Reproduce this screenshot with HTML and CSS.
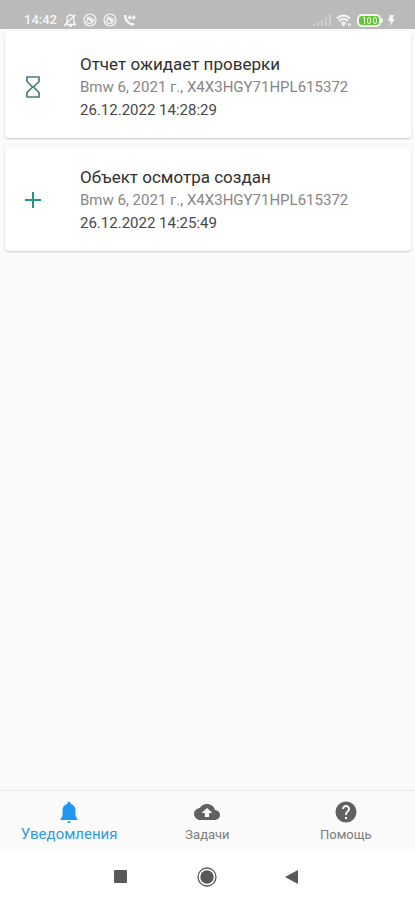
FILE: index.html
```html
<!DOCTYPE html>
<html lang="ru">
<head>
<meta charset="utf-8">
<meta name="viewport" content="width=device-width, initial-scale=1">
<title>Уведомления</title>
<link rel="stylesheet" href="styles.css">
</head>
<body>
<header class="status">
  <div class="status-group">
    <span class="clock">14:42</span>
    <svg width="14" height="14" viewBox="0 0 14 14" fill="none" stroke="currentColor" stroke-width="1.3"><path d="M2 11.5h10.5L11 9.500V6C11 3.500 9.500 2 7.500 2S4 3.500 4 6v3.500zM6 13h3M1 13L12.500 1.500"/></svg>
    <svg width="14" height="14" viewBox="0 0 14 14" fill="none" stroke="currentColor" stroke-width="1.200"><circle cx="7" cy="7" r="6"/><path d="M3 9l3-5 5 3-4 4zM4 4l6 6M6 6l3 1"/></svg>
    <svg width="14" height="14" viewBox="0 0 14 14" fill="none" stroke="currentColor" stroke-width="1.200"><circle cx="7" cy="7" r="6"/><path d="M3 9l3-5 5 3-4 4zM4 4l6 6M6 6l3 1"/></svg>
    <svg width="13" height="14" viewBox="0 0 13 14" fill="none" stroke="currentColor"><path stroke-width="2.400" d="M2 2c0 6 4 9.500 9 9.500M1.500 3.500h2M10 12v-2"/><path stroke-width="1.400" d="M5.500 4.500h6M7.500 2.500l-2 2 2 2M10 2.500l2 2-2 2"/></svg>
  </div>
  <div class="status-group status-right">
    <svg class="signal" width="18" height="12" viewBox="0 0 18 12" fill="currentColor"><path d="M0 10h2v2H0zM4 8h2v4H4zM8 6h2v6H8zM12 3h2v9h-2zM16 0h2v12h-2z"/></svg>
    <svg width="16" height="13" viewBox="0 0 16 13" fill="none" stroke="currentColor" stroke-width="2"><path d="M1 4.500c4-4 9-4 13 0M3 7c3-3 6-3 9 0M5.500 9.500c1.500-1.300 2.500-1.300 4 0"/><path d="M12.500 9v3M14.500 9v3" stroke-width="1"/><path d="M5.500 10h4l-2 2.500z" fill="currentColor" stroke="none"/></svg>
    <svg width="26" height="13" viewBox="0 0 26 13"><rect width="24" height="13" rx="5" fill="#f2f8ee"/><path d="M24 4a2 2 0 0 1 2 2v1a2 2 0 0 1-2 2z" fill="#f2f8ee"/><rect x="2" y="2" width="20" height="9" rx="3" fill="#65c63b"/><path d="M6 4l1.500-1v7" fill="none" stroke="#eef8e8"/><rect x="10.500" y="3.500" width="3" height="6" rx="1.500" fill="none" stroke="#eef8e8"/><rect x="16.500" y="3.500" width="3" height="6" rx="1.500" fill="none" stroke="#eef8e8"/></svg>
    <svg width="7" height="11" viewBox="0 0 7 11" fill="currentColor"><path d="M2 0h4L4.500 4H7L2 11l.8-5H0z"/></svg>
  </div>
</header>

<main class="list">
  <article class="card">
    <div class="card-icon"><svg width="16" height="24" viewBox="0 0 16 24" fill="none" stroke="#4a7c80" stroke-width="1.700"><path d="M2 2h12v4.500L8.500 12l5.500 5.500V22H2v-4.500L7.500 12 2 6.500z"/></svg></div>
    <div class="card-text">
      <h2 class="title">Отчет ожидает проверки</h2>
      <p class="object">Bmw 6, 2021 г., X4X3HGY71HPL615372</p>
      <time class="date" datetime="2022-12-26T14:28:29">26.12.2022 14:28:29</time>
    </div>
  </article>
  <article class="card">
    <div class="card-icon"><svg width="16" height="16" viewBox="0 0 16 16" fill="none" stroke="#239782" stroke-width="2"><path d="M8 0v16M0 8h16"/></svg></div>
    <div class="card-text">
      <h2 class="title">Объект осмотра создан</h2>
      <p class="object">Bmw 6, 2021 г., X4X3HGY71HPL615372</p>
      <time class="date" datetime="2022-12-26T14:25:49">26.12.2022 14:25:49</time>
    </div>
  </article>
</main>

<nav class="tabs">
  <a class="tab active" href="#notifications" aria-current="page">
    <svg width="24" height="24" viewBox="0 0 24 24" fill="#2196f3"><path d="M12 23c1.100 0 2-.7 2-1.500h-4c0 .8.900 1.500 2 1.500zM18.500 16v-5.500c0-3.300-1.800-6-5-6.700v-.6c0-.9-.6-1.500-1.500-1.500s-1.500.6-1.500 1.500v.6c-3.200.7-5 3.400-5 6.700V16L3.500 19v1h17v-1z"/></svg>
    Уведомления
  </a>
  <a class="tab" href="#tasks">
    <svg width="26" height="24" viewBox="0 0 24 24" preserveAspectRatio="none" fill="#616161"><path d="M19.350 10.040C18.670 6.590 15.640 4 12 4 9.110 4 6.600 5.640 5.350 8.040 2.340 8.360 0 10.910 0 14c0 3.310 2.690 6 6 6h13c2.760 0 5-2.240 5-5 0-2.640-2.050-4.780-4.650-4.960zM14 13v4h-4v-4H7l5-5 5 5h-3z"/></svg>
    Задачи
  </a>
  <a class="tab" href="#help">
    <svg width="24" height="24" viewBox="0 0 24 24" fill="#616161"><path d="M12 1.500a10.500 10.500 0 1 0 0 21 10.500 10.500 0 0 0 0-21zm1 17.500h-2v-2h2zm2.070-7.750l-.9.920C13.450 12.900 13 13.500 13 15h-2v-.5c0-1.100.450-2.100 1.170-2.830l1.240-1.260c.370-.360.590-.860.590-1.410 0-1.100-.9-2-2-2s-2 .9-2 2H8c0-2.210 1.790-4 4-4s4 1.790 4 4c0 .880-.360 1.680-.930 2.250z"/></svg>
    Помощь
  </a>
</nav>

<footer class="system">
  <button class="key" aria-label="Недавние"><svg width="20" height="20" viewBox="0 0 20 20"><rect x="3" y="3" width="13" height="13" rx="1" fill="#585858"/></svg></button>
  <button class="key" aria-label="Домой"><svg width="20" height="20" viewBox="0 0 20 20"><circle cx="10" cy="10" r="9" fill="none" stroke="#585858" stroke-width="1.300"/><circle cx="10" cy="10" r="6.700" fill="#585858"/></svg></button>
  <button class="key" aria-label="Назад"><svg width="20" height="20" viewBox="0 0 20 20"><path d="M15 3v14L2 10z" fill="#585858"/></svg></button>
</footer>
</body>
</html>
```
FILE: styles.css
```css
* { box-sizing: border-box; }

body {
  margin: 0;
  min-height: 100vh;
  display: flex;
  flex-direction: column;
  background: #fafafa;
  font-family: Roboto, "Liberation Sans", sans-serif;
}

svg { display: block; flex: none; }

.status {
  display: flex;
  justify-content: space-between;
  padding: 12px 20px 0 24px;
  height: 29px;
  background: #bababa;
  color: #f6f6f6;
}

.status-group {
  display: flex;
  align-items: center;
  gap: 6px;
  height: 16px;
}

.status-right { gap: 5px; }
.clock { font-size: 13px; font-weight: 500; line-height: 16px; }
.signal { color: #cecece; }

.list {
  flex: 1;
  display: flex;
  flex-direction: column;
  gap: 10px;
  padding: 2px 4px 0 5px;
}

.card {
  display: flex;
  align-items: center;
  min-height: 103px;
  padding: 16px 0;
  background: #fff;
  border-radius: 4px;
  box-shadow: 0 1px 2px rgba(0, 0, 0, 0.2);
}

.card:first-child {
  min-height: 107px;
  padding-top: 20px;
}

.card-icon {
  display: flex;
  justify-content: center;
  width: 56px;
  margin-right: 19px;
}

.card-text { padding-top: 2px; }

.title, .object, .date {
  display: block;
  margin: 0;
  font-weight: 400;
  line-height: 23px;
}

.title { font-size: 17px; color: #303030; }
.object { font-size: 15px; color: #868686; }
.date { font-size: 15px; color: #484848; }

.tabs {
  display: grid;
  grid-template-columns: repeat(3, 1fr);
  height: 61px;
  border-top: 1px solid #ebebeb;
}

.tab {
  display: flex;
  flex-direction: column;
  align-items: center;
  padding-top: 9px;
  color: #7d7d7d;
  font-size: 13px;
  line-height: 22px;
  text-decoration: none;
}

.tab.active {
  color: #2f9bdc;
  font-size: 15px;
  line-height: 20px;
}

.system {
  display: flex;
  justify-content: center;
  gap: 66px;
  padding: 16px 2px 13px 0;
  background: #fff;
}

.key {
  padding: 0;
  border: 0;
  background: none;
}
```
